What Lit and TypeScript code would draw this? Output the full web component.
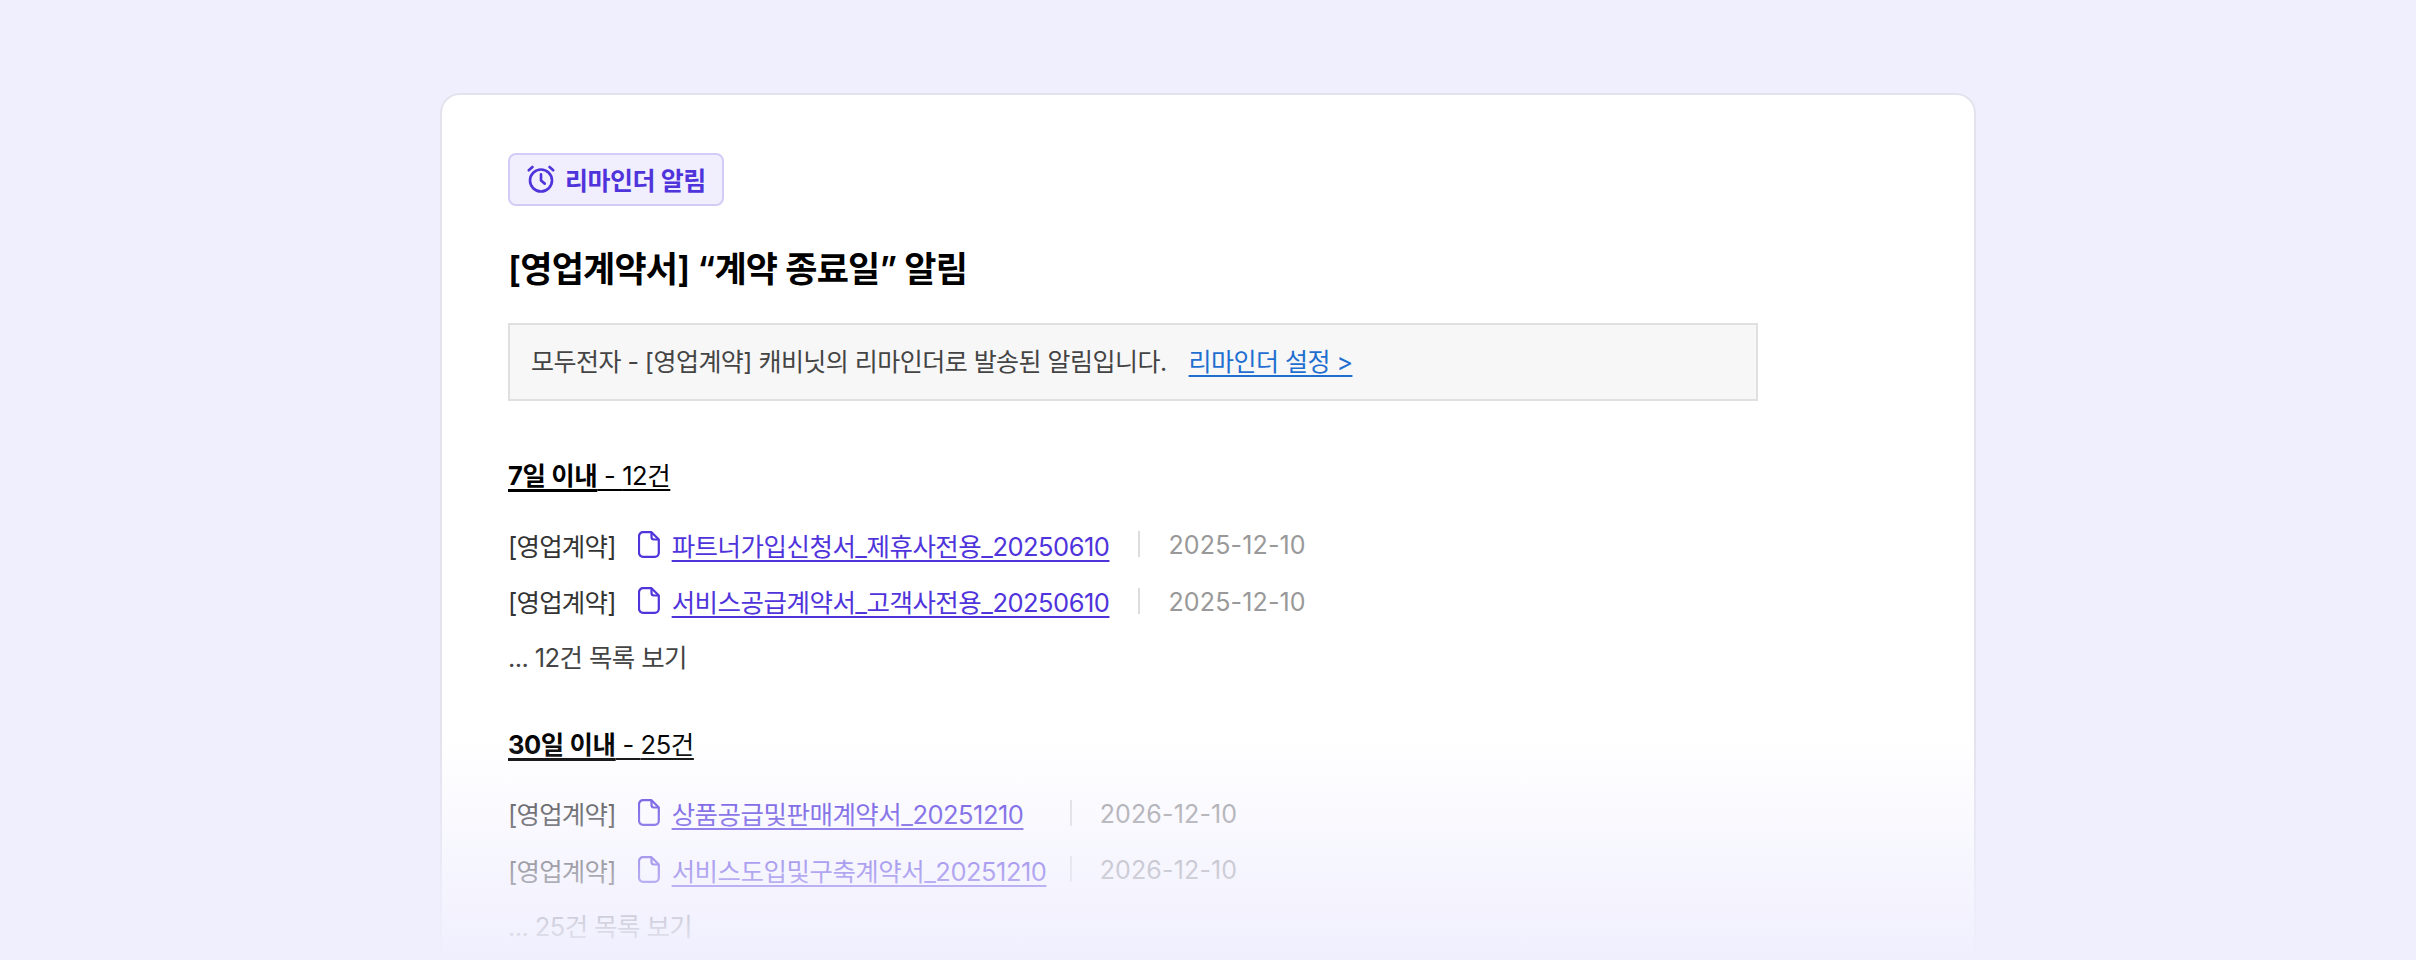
import { LitElement, html, css } from "lit";
import { customElement } from "lit/decorators.js";

const alarmIcon = html`<svg class="alarm" viewBox="0 0 24 24" fill="none" stroke="currentColor" stroke-width="2.100" stroke-linecap="round" stroke-linejoin="round">
  <circle cx="12" cy="13.200" r="8.800"></circle>
  <path d="M12 8.200v5l3 2.500"></path>
  <path d="M5.200 2.400 2.200 5"></path>
  <path d="M18.800 2.400 21.800 5"></path>
</svg>`;

const fileIcon = html`<svg class="file" viewBox="0 0 22 27" fill="none" stroke="currentColor" stroke-width="2.200" stroke-linejoin="round">
  <path d="M5 1.200h8.500l7.300 7.300v13.300a4 4 0 0 1-4 4H5a4 4 0 0 1-4-4V5.200a4 4 0 0 1 4-4Z"></path>
  <path d="M13.500 1.200V6a2.500 2.500 0 0 0 2.500 2.500h4.800"></path>
</svg>`;

const sections = [
  {
    title: "7일 이내",
    count: "12건",
    more: "... 12건 목록 보기",
    rows: [
      { name: "파트너가입신청서_제휴사전용_20250610", date: "2025-12-10" },
      { name: "서비스공급계약서_고객사전용_20250610", date: "2025-12-10" },
    ],
  },
  {
    title: "30일 이내",
    count: "25건",
    more: "... 25건 목록 보기",
    rows: [
      { name: "상품공급및판매계약서_20251210", date: "2026-12-10" },
      { name: "서비스도입및구축계약서_20251210", date: "2026-12-10" },
    ],
  },
];

@customElement("app-root")
export class AppRoot extends LitElement {
  static styles = css`
    :host {
      display: block;
      height: 960px;
      overflow: hidden;
      position: relative;
      background: #f0effe;
      font-family: Inter, "Noto Sans CJK KR", sans-serif;
      color: #333;
    }
    .page {
      display: flex;
      justify-content: center;
      padding-top: 93px;
    }
    .card {
      width: 1536px;
      height: 1000px;
      box-sizing: border-box;
      background: #fff;
      border: 2px solid #e3e3ee;
      border-radius: 20px;
      padding: 58px 66px;
    }
    .badge {
      display: inline-flex;
      align-items: center;
      gap: 9px;
      height: 53px;
      box-sizing: border-box;
      padding: 0 16px 2px;
      background: #f1effe;
      border: 2px solid #d2cdf7;
      border-radius: 8px;
      color: #5034db;
      font-size: 25px;
      letter-spacing: -0.500px;
      font-weight: 600;
    }
    .alarm {
      width: 30px;
      height: 30px;
    }
    h1 {
      margin: 37px 0 0;
      font-size: 35px;
      letter-spacing: -0.800px;
      line-height: 52px;
      font-weight: 600;
      color: #000;
    }
    .notice {
      margin-top: 28px;
      width: 1250px;
      height: 78px;
      display: flex;
      align-items: center;
      gap: 22px;
      box-sizing: border-box;
      padding: 0 21px 4px;
      background: #f7f7f7;
      border: 2px solid #e0e0e0;
      font-size: 25px;
      letter-spacing: -0.530px;
      color: #444;
    }
    .notice a {
      color: #1f6fd0;
      text-decoration: underline;
      text-underline-offset: 4px;
    }
    .section {
      margin-top: 55px;
    }
    h2 {
      margin: 0 0 21px;
      font-size: 25.500px;
      letter-spacing: -0.400px;
      line-height: 40px;
      font-weight: 400;
      color: #000;
    }
    h2 b {
      font-weight: 700;
      text-decoration: underline 3px;
      text-underline-offset: 4px;
    }
    h2 span {
      text-decoration: underline 2px;
      text-underline-offset: 4px;
    }
    .row {
      display: flex;
      align-items: center;
      box-sizing: border-box;
      height: 56.500px;
      padding-bottom: 2px;
      font-size: 25.500px;
      letter-spacing: -0.500px;
    }
    .tag {
      color: #333;
      letter-spacing: -0.800px;
    }
    .file {
      width: 22px;
      height: 27px;
      margin-left: 22px;
      margin-right: 12px;
      color: #5034db;
    }
    .name {
      padding-right: 29px;
    }
    .name a {
      color: #5034db;
      text-decoration: underline 2px;
      text-underline-offset: 4px;
    }
    .sep {
      width: 2px;
      height: 26px;
      margin-right: 28px;
      background: #ddd;
    }
    .date {
      padding-top: 2px;
      color: #999;
      font-size: 25px;
      letter-spacing: 0.150px;
    }
    .more {
      line-height: 56.500px;
      font-size: 25.500px;
      letter-spacing: -0.600px;
      color: #444;
    }
    .section + .section {
      margin-top: 38px;
    }
    .section + .section .name {
      width: 398px;
      padding-right: 0;
    }
    .fade {
      position: absolute;
      left: 0;
      right: 0;
      bottom: 0;
      height: 225px;
      background: linear-gradient(to bottom, rgba(240, 239, 254, 0), #f0effe);
    }
  `;

  render() {
    return html`
      <div class="page">
        <div class="card">
          <div class="badge">${alarmIcon}리마인더 알림</div>
          <h1>[영업계약서] “계약 종료일” 알림</h1>
          <div class="notice">
            <span>모두전자 - [영업계약] 캐비닛의 리마인더로 발송된 알림입니다.</span>
            <a>리마인더 설정 &gt;</a>
          </div>
          ${sections.map(
            (s) => html`
              <div class="section">
                <h2><b>${s.title}</b><span> - ${s.count}</span></h2>
                ${s.rows.map(
                  (r) => html`
                    <div class="row">
                      <span class="tag">[영업계약]</span>
                      ${fileIcon}
                      <span class="name"><a>${r.name}</a></span>
                      <span class="sep"></span>
                      <span class="date">${r.date}</span>
                    </div>
                  `
                )}
                <div class="more">${s.more}</div>
              </div>
            `
          )}
        </div>
      </div>
      <div class="fade"></div>
    `;
  }
}
